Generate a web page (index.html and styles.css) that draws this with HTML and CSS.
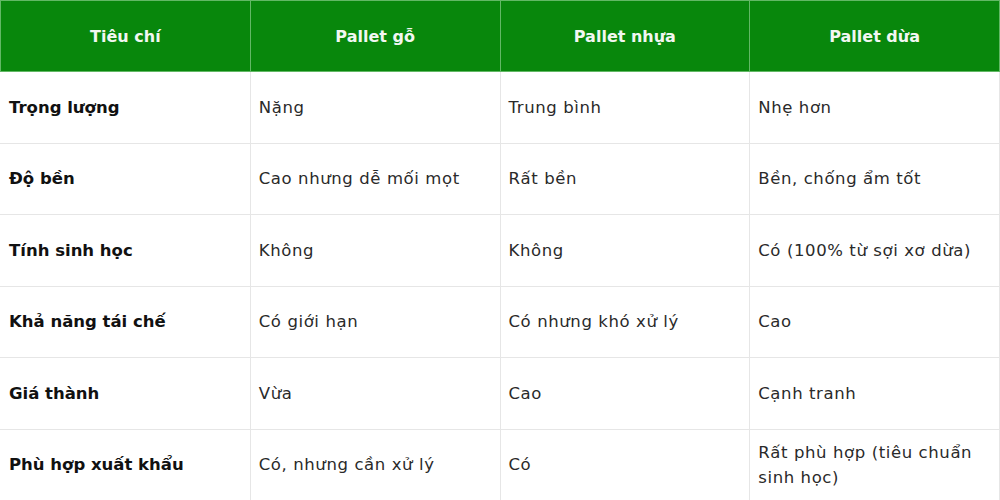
FILE: index.html
```html
<!DOCTYPE html>
<html lang="vi">
<head>
<meta charset="utf-8">
<link rel="stylesheet" href="styles.css">
</head>
<body>
<table class="cmp">
  <thead>
    <tr><th>Tiêu chí</th><th>Pallet gỗ</th><th>Pallet nhựa</th><th>Pallet dừa</th></tr>
  </thead>
  <tbody>
    <tr><td class="crit">Trọng lượng</td><td>Nặng</td><td>Trung bình</td><td>Nhẹ hơn</td></tr>
    <tr><td class="crit">Độ bền</td><td>Cao nhưng dễ mối mọt</td><td>Rất bền</td><td>Bền, chống ẩm tốt</td></tr>
    <tr><td class="crit">Tính sinh học</td><td>Không</td><td>Không</td><td>Có (100% từ sợi xơ dừa)</td></tr>
    <tr><td class="crit">Khả năng tái chế</td><td>Có giới hạn</td><td>Có nhưng khó xử lý</td><td>Cao</td></tr>
    <tr><td class="crit">Giá thành</td><td>Vừa</td><td>Cao</td><td>Cạnh tranh</td></tr>
    <tr><td class="crit">Phù hợp xuất khẩu</td><td>Có, nhưng cần xử lý</td><td>Có</td><td>Rất phù hợp (tiêu chuẩn sinh học)</td></tr>
  </tbody>
</table>
</body>
</html>
```
FILE: styles.css
```css
html, body {
  margin: 0;
  padding: 0;
  background: #ffffff;
}
.cmp {
  width: 1000px;
  height: 500px;
  border-collapse: collapse;
  table-layout: fixed;
  font-family: "DejaVu Sans", "Liberation Sans", sans-serif;
  font-size: 16.5px;
  line-height: 25px;
  color: #2a2a2a;
}
.cmp thead tr {
  height: 71px;
}
.cmp tbody tr {
  height: 71.5px;
}
.cmp th {
  background: #08870c;
  color: #f2f7f2;
  font-weight: 700;
  font-size: 16px;
  text-align: center;
  vertical-align: middle;
  border: 1px solid #62b865;
  padding: 0 8px;
}
.cmp td {
  border: 1px solid #e6e6e6;
  padding: 0 8px;
  vertical-align: middle;
  text-align: left;
  letter-spacing: 0.6px;
}
.cmp td.crit {
  font-weight: 700;
  color: #111111;
  letter-spacing: 0;
  border-left-color: #ffffff;
}
```
